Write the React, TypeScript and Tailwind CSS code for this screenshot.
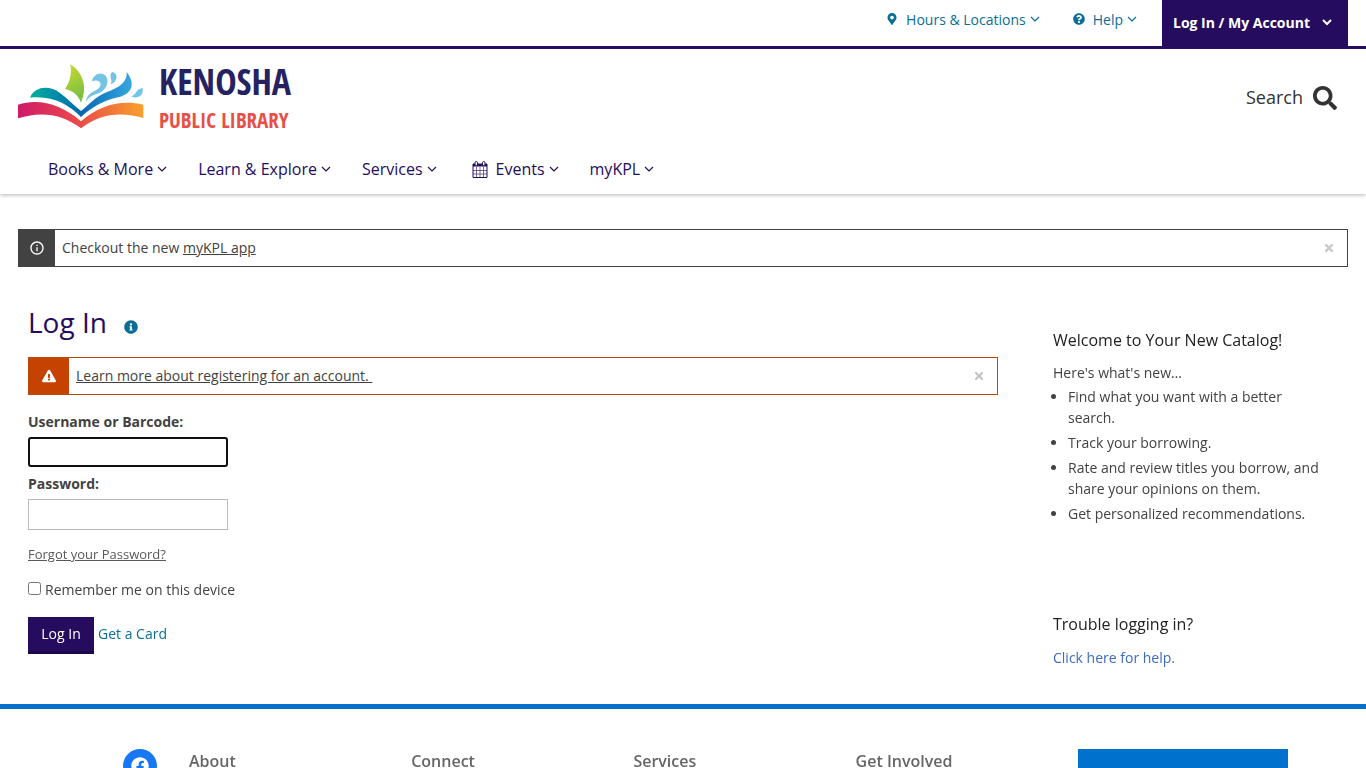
import React from 'react';
import { FaMapMarkerAlt, FaQuestionCircle, FaInfoCircle, FaExclamationTriangle, FaSearch, FaFacebook, FaTimes } from 'react-icons/fa';
import { MdInfoOutline } from 'react-icons/md';

const NAV_ITEMS = [
  { label: 'Books & More' },
  { label: 'Learn & Explore' },
  { label: 'Services' },
  { label: 'Events', calendar: true },
  { label: 'myKPL' },
];

const NEWS = [
  'Find what you want with a better search.',
  'Track your borrowing.',
  'Rate and review titles you borrow, and share your opinions on them.',
  'Get personalized recommendations.',
];

const FOOTER_COLUMNS = ['About', 'Connect', 'Services', 'Get Involved'];

const Chevron: React.FC<{ bold?: boolean }> = ({ bold }) => (
  <svg viewBox="0 0 10 8" className="w-[10px] h-2 shrink-0" fill="none" stroke="currentColor" strokeWidth={bold ? 2 : 1.2}>
    <path d="M1 2 L5 6 L9 2" />
  </svg>
);

const CalendarIcon: React.FC = () => (
  <svg viewBox="0 0 16 17" className="w-4 h-[17px] shrink-0" aria-hidden="true">
    <path d="M1 3h14v13.5H1z" fill="none" stroke="currentColor" />
    <path d="M1 3h14v2.5H1z" fill="currentColor" />
    <path d="M4.5 6v10M8 6v10M11.5 6v10M1 9.5h14M1 13h14" stroke="currentColor" strokeWidth="0.6" />
    <rect x="3" y="0.5" width="2.5" height="4" rx="1.2" fill="#fff" stroke="currentColor" />
    <rect x="10.5" y="0.5" width="2.5" height="4" rx="1.2" fill="#fff" stroke="currentColor" />
  </svg>
);

// Open book with sail and waves
const BookMark: React.FC = () => (
  <svg viewBox="0 0 378 204" className="w-[126px] h-[68px] shrink-0" aria-hidden="true">
    <defs>
      <linearGradient id="pageLeft" x1="0" x2="1">
        <stop offset="0" stopColor="#cf1a68" />
        <stop offset="1" stopColor="#ec4b4a" />
      </linearGradient>
      <linearGradient id="pageRight" x1="0" x2="1">
        <stop offset="0" stopColor="#e84f48" />
        <stop offset="1" stopColor="#f9a02c" />
      </linearGradient>
      <linearGradient id="waveLeft" x1="0" x2="1">
        <stop offset="0" stopColor="#00b09c" />
        <stop offset="1" stopColor="#0168b3" />
      </linearGradient>
      <linearGradient id="waveRight" x1="0" x2="1">
        <stop offset="0" stopColor="#0a66b4" />
        <stop offset="1" stopColor="#35a8e0" />
      </linearGradient>
      <linearGradient id="sail" x1="0" y1="0" x2="0.3" y2="1">
        <stop offset="0" stopColor="#cbdb2c" />
        <stop offset="1" stopColor="#7cc043" />
      </linearGradient>
    </defs>
    <path d="M0 128 C65 108 130 128 189 178 V199 C130 155 70 148 0 169 Z" fill="url(#pageLeft)" />
    <path d="M376 128 C310 112 245 128 189 178 V199 C245 155 310 148 376 168 Z" fill="url(#pageRight)" />
    <path d="M36 107 C50 74 92 68 126 93 C150 111 168 131 189 147 V165 C150 127 105 100 36 107 Z" fill="url(#waveLeft)" />
    <path d="M326 30 C354 66 342 96 300 106 C250 116 215 142 189 165 V147 C212 129 232 104 262 92 C300 78 328 64 326 30 Z" fill="url(#waveRight)" />
    <path d="M157 7 C192 28 211 73 189 122 C181 100 164 85 141 81 C156 60 162 34 157 7 Z" fill="url(#sail)" />
    <g fill="#74c5e5">
      <path d="M221 58 C226 36 252 26 264 43 C276 62 262 90 236 96 C220 100 210 108 203 120 C208 92 226 90 240 80 C256 68 246 48 221 58 Z" />
      <path d="M282 30 C302 32 300 60 278 67 C286 52 270 44 282 30 Z" />
      <path d="M374 78 C378 102 358 112 338 103 C356 101 350 82 374 78 Z" />
    </g>
  </svg>
);

const Logo: React.FC = () => (
  <a href="#" aria-label="Kenosha Public Library" className="flex items-center gap-[15px] pb-0.5 font-['Open_Sans_Condensed','Open_Sans',sans-serif] font-bold">
    <BookMark />
    <span className="flex flex-col">
      <span className="text-[36px] leading-[49px] text-[#262262]">KENOSHA</span>
      <span className="text-[21px] leading-[29px] text-[#e84f48]">PUBLIC LIBRARY</span>
    </span>
  </a>
);

const TopBar: React.FC = () => (
  <div className="h-[49px] flex justify-end items-start px-[18px] border-b-[3px] border-[#260c5e] text-[#0a6e95]">
    <button type="button" className="flex items-center h-[38px] mr-[33px]">
      <FaMapMarkerAlt size={12} className="mr-2" />
      Hours &amp; Locations
      <span className="ml-1"><Chevron /></span>
    </button>
    <button type="button" className="flex items-center h-[38px] mr-[25px]">
      <FaQuestionCircle size={12} className="mr-2" />
      Help
      <span className="ml-1"><Chevron /></span>
    </button>
    <button type="button" className="flex items-center justify-between w-[186px] h-[46px] pl-[11px] pr-4 pb-0.5 bg-[#260c5e] text-white font-bold">
      Log In / My Account
      <Chevron bold />
    </button>
  </div>
);

const MainNav: React.FC = () => (
  <nav className="flex items-center gap-[31px] px-12 h-[50px] text-[16px] text-[#260c5e]">
    {NAV_ITEMS.map((item) => (
      <button key={item.label} type="button" className="flex items-center gap-1">
        {item.calendar && <span className="mx-1"><CalendarIcon /></span>}
        {item.label}
        <Chevron />
      </button>
    ))}
  </nav>
);

const CloseButton: React.FC = () => (
  <button type="button" aria-label="Close" className="px-3 text-[#c6c6c6]">
    <FaTimes size={12} />
  </button>
);

const LoginForm: React.FC = () => (
  <form className="flex flex-col items-start" onSubmit={(e) => e.preventDefault()}>
    <label htmlFor="username" className="mt-4 leading-[22px] font-bold">Username or Barcode:</label>
    <input id="username" type="text" autoFocus className="mt-1 w-[200px] h-[30px] px-1 rounded-[3px] border-2 border-[#101010] outline-none" />
    <label htmlFor="password" className="mt-1.5 leading-[22px] font-bold">Password:</label>
    <input id="password" type="password" className="mt-1 w-[200px] h-[31px] px-1 border border-[#bbb] outline-none" />
    <a href="#" className="mt-[13px] text-[13px] leading-[22px] underline text-[#595959]">Forgot your Password?</a>
    <div className="mt-3.5 flex items-start">
      <input id="remember" type="checkbox" className="size-[13px] mt-[3px] mr-1" />
      <label htmlFor="remember" className="leading-[22px]">Remember me on this device</label>
    </div>
    <div className="mt-4 flex items-baseline gap-1">
      <button type="submit" className="w-[66px] h-[37px] pb-0.5 bg-[#260c5e] text-white border-b-[3px] border-[#1c0748]">Log In</button>
      <a href="#" className="text-[#0a6e95]">Get a Card</a>
    </div>
  </form>
);

const Sidebar: React.FC = () => (
  <aside className="w-[285px] shrink-0 pt-[25px] pr-2.5">
    <h2 className="text-[16px] leading-6 text-[#222]">Welcome to Your New Catalog!</h2>
    <p className="mt-2.5 leading-[21px]">Here's what's new…</p>
    <ul className="list-disc pl-[15px] mt-[3px] flex flex-col gap-1">
      {NEWS.map((item) => (
        <li key={item} className="leading-[21px]">{item}</li>
      ))}
    </ul>
    <h2 className="mt-[88px] text-[16px] leading-6 text-[#222]">Trouble logging in?</h2>
    <p className="mt-[11px] leading-[22px]">
      <a href="#" className="text-[#3b6cc0]">Click here for help.</a>
    </p>
  </aside>
);

const Footer: React.FC = () => (
  <footer className="mt-[35px] border-t-[5px] border-[#0770cd] pt-10 pl-[123px] pr-[66px] flex text-[#666]">
    <a href="#" aria-label="Facebook" className="size-[34px] mr-8 shrink-0 rounded-full bg-[#1877f2] text-white flex items-center justify-center">
      <FaFacebook size={18} />
    </a>
    <div className="flex-1 grid grid-cols-5">
      {FOOTER_COLUMNS.map((title) => (
        <h2 key={title} className="text-[16px] leading-6 font-semibold">{title}</h2>
      ))}
      <div className="h-12 mr-3 bg-[#0072ce]" />
    </div>
  </footer>
);

const App: React.FC = () => (
  <div className="bg-white font-['Open_Sans',sans-serif] text-[14px] text-[#424242]">
    <header className="shadow-[0_1px_4px_rgba(0,0,0,0.3)]">
      <TopBar />
      <div className="flex items-center justify-between pl-[18px] pr-[29px] h-[95px]">
        <Logo />
        <button type="button" className="flex items-center gap-2.5 pt-0.5 text-[18px] font-medium text-[#333]">
          Search
          <FaSearch size={24} />
        </button>
      </div>
      <MainNav />
    </header>

    <div className="mx-[18px] mt-[35px] flex items-center h-[38px] border border-[#424242]">
      <span className="w-9 self-stretch flex items-center justify-center bg-[#424242] text-white">
        <MdInfoOutline size={16} />
      </span>
      <p className="flex-1 pl-[7px] pb-0.5">
        Checkout the new <a href="#" className="underline">myKPL app</a>
      </p>
      <CloseButton />
    </div>

    <div className="flex gap-[55px] px-7 mt-[36px]">
      <main className="flex-1">
        <div className="flex items-center gap-[17px]">
          <h1 className="text-[28px] leading-[38px] text-[#260c5e]">Log In</h1>
          <FaInfoCircle size={14} className="text-[#0a6e95] mt-2.5" />
        </div>
        <div className="mt-4 flex items-center h-[38px] border border-[#b84a0c]">
          <span className="w-10 self-stretch flex items-center justify-center bg-[#c64200] text-white">
            <FaExclamationTriangle size={14} />
          </span>
          <p className="flex-1 pl-[7px] pb-0.5">
            <a href="#" className="underline whitespace-pre">Learn more about registering for an account. </a>
          </p>
          <CloseButton />
        </div>
        <LoginForm />
      </main>
      <Sidebar />
    </div>

    <Footer />
  </div>
);

export default App;
